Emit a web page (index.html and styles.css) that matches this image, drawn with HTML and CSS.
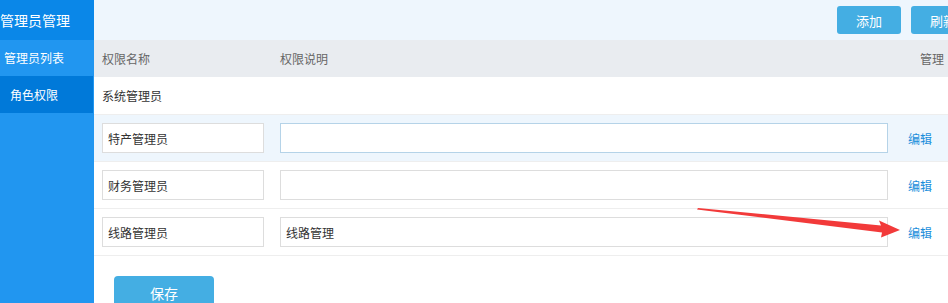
FILE: index.html
```html
<!DOCTYPE html>
<html lang="zh-CN">
  <head>
    <meta charset="UTF-8" />
    <meta name="viewport" content="width=device-width, initial-scale=1.0" />
    <title>角色权限</title>
    <link rel="stylesheet" href="styles.css">
  </head>

  <body>
    <div class="page">
      <div class="sidebar">
        <div class="side-title">管理员管理</div>
        <a class="side-item item-list">管理员列表</a>
        <a class="side-item item-role active">角色权限</a>
      </div>

      <div class="main">
        <div class="toolbar">
          <button class="btn">添加</button>
          <button class="btn">刷新</button>
        </div>

        <div class="table">
          <div class="row head">
            <div>权限名称</div>
            <div>权限说明</div>
            <div class="manage">管理</div>
          </div>
          <div class="row plain">
            <div>系统管理员</div>
            <div></div>
            <div></div>
          </div>
          <div class="row hover">
            <div><input type="text" class="name" value="特产管理员" /></div>
            <div><input type="text" class="desc focus" value="" /></div>
            <div><a class="edit">编辑</a></div>
          </div>
          <div class="row">
            <div><input type="text" class="name" value="财务管理员" /></div>
            <div><input type="text" class="desc" value="" /></div>
            <div><a class="edit">编辑</a></div>
          </div>
          <div class="row">
            <div><input type="text" class="name" value="线路管理员" /></div>
            <div><input type="text" class="desc" value="线路管理" /></div>
            <div><a class="edit">编辑</a></div>
          </div>
        </div>

        <div class="actions">
          <button class="btn save">保存</button>
        </div>

        <!-- 标注箭头 -->
        <svg class="arrow" width="220" height="40" viewBox="0 0 220 40">
          <polygon points="3,9 186,26.5 184,21.5 205,31 186,38.5 187,33.5 2,10.5" fill="#f23a3a" />
        </svg>
      </div>
    </div>
  </body>
</html>
```

FILE: styles.css
```css
body {
  margin: 0;
  font-family: "Noto Sans CJK SC", "Noto Sans", sans-serif;
  font-size: 12px;
  color: #333;
  overflow: hidden;
}

.page {
  display: flex;
  width: 1000px;
  height: 303px;
}

.sidebar {
  width: 94px;
  flex-shrink: 0;
  background-color: #2196f0;
}

.side-title {
  height: 40px;
  line-height: 40px;
  background-color: #0a87e8;
  color: #fff;
  font-size: 14px;
  white-space: nowrap;
}

.side-item {
  display: block;
  height: 36px;
  line-height: 36px;
  color: #fff;
  font-size: 12px;
}

.item-list {
  padding-left: 4px;
}

.item-role {
  height: 37px;
  line-height: 37px;
  padding-left: 10px;
  width: 83px;
}

.side-item.active {
  background-color: #0079d9;
}

.main {
  flex: 1;
  position: relative;
  background-color: #fff;
}

.toolbar {
  height: 40px;
  background-color: #eef6fd;
  display: flex;
  align-items: center;
  justify-content: flex-end;
  gap: 10px;
  padding-right: 25px;
}

.btn {
  width: 64px;
  height: 28px;
  border: none;
  border-radius: 3px;
  background-color: #44aee3;
  color: #fff;
  font-family: inherit;
  font-size: 13px;
  cursor: pointer;
}

.row {
  display: grid;
  grid-template-columns: 178px 628px 1fr;
  align-items: center;
  padding-left: 8px;
  height: 46px;
  border-bottom: 1px solid #eeeeee;
}

.row.head {
  height: 37px;
  background-color: #e9ecf0;
  color: #666;
  border-bottom: none;
}

.row.head .manage {
  padding-left: 12px;
}

.row.plain {
  height: 37px;
}

.row.hover {
  background-color: #eef6fd;
}

.row input {
  box-sizing: border-box;
  height: 30px;
  border: 1px solid #dddddd;
  background-color: #fff;
  padding: 0 5px;
  font-family: inherit;
  font-size: 12px;
  color: #333;
  outline: none;
  display: block;
}

.row input.name {
  width: 162px;
}

.row input.desc {
  width: 608px;
}

.row input.focus {
  border-color: #b5d3e8;
}

.edit {
  color: #1a8edb;
  cursor: pointer;
}

.actions {
  padding: 20px 0 0 20px;
}

.btn.save {
  width: 100px;
  height: 34px;
  font-size: 14px;
  border-radius: 4px;
}

.arrow {
  position: absolute;
  left: 601px;
  top: 199px;
}
```
